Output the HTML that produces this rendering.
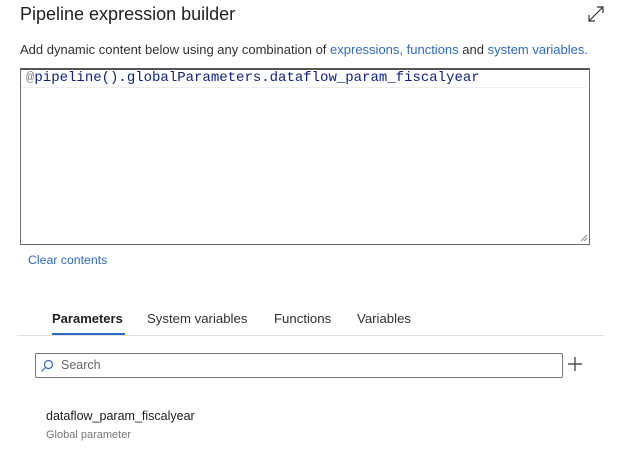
<!DOCTYPE html>
<html><head><style>
body{margin:0;width:621px;height:450px;background:#fff;font-family:"Liberation Sans",sans-serif;position:relative;overflow:hidden;color:#323130}
.a{position:absolute;white-space:nowrap}
.blue{color:#2f6bc4}
</style></head><body>
<div class="a" style="left:20px;top:4px;font-size:18px;color:#201f1e">Pipeline expression builder</div>
<svg class="a" style="left:587px;top:5px" width="18" height="18" viewBox="0 0 18 18" fill="none" stroke="#333" stroke-width="1.2"><path d="M2 16L16 2M10 2h6v6M2 10v6h6"/></svg>
<div class="a" style="left:20px;top:42px;font-size:13px;color:#323130">Add dynamic content below using any combination of <span class="blue">expressions, functions</span> and <span class="blue">system variables.</span></div>
<div class="a" style="left:20px;top:68px;width:568px;height:174px;border:1px solid #6e6e6e;border-top:2px solid #555"></div>
<div class="a" style="left:22px;top:70px;width:564px;height:17px;border-bottom:1px solid #eee"></div>
<div class="a" style="left:26px;top:70px;font-family:'Liberation Mono',monospace;font-size:14px;color:#0b1f8a"><span style="color:#888">@</span>pipeline().globalParameters.dataflow_param_fiscalyear</div>
<svg class="a" style="left:580px;top:234px" width="8" height="8"><path d="M1 7L7 1M4 7L7 4" stroke="#888"/></svg>
<div class="a blue" style="left:28px;top:253px;font-size:12.3px">Clear contents</div>
<div class="a" style="left:52px;top:311px;font-size:13px;font-weight:bold;color:#201f1e">Parameters</div>
<div class="a" style="left:147px;top:311px;font-size:13.2px">System variables</div>
<div class="a" style="left:274px;top:311px;font-size:13.2px">Functions</div>
<div class="a" style="left:357px;top:311px;font-size:13.2px">Variables</div>
<div class="a" style="left:17px;top:335px;width:587px;height:1px;background:#e1dfdd"></div>
<div class="a" style="left:52px;top:333px;width:73px;height:2px;background:#2f6bc4"></div>
<div class="a" style="left:35px;top:353px;width:526px;height:23px;border:1px solid #777;border-radius:2px"></div>
<svg class="a" style="left:40px;top:359px" width="14" height="14" fill="none" stroke="#2f6bc4" stroke-width="1.2"><circle cx="8.5" cy="5.5" r="4"/><path d="M5.5 8.5L1.5 12.5"/></svg>
<div class="a" style="left:61px;top:358px;font-size:12.5px;color:#666">Search</div>
<svg class="a" style="left:567px;top:356px" width="16" height="16" stroke="#333" stroke-width="1.2"><path d="M8 1v14M1 8h14"/></svg>
<div class="a" style="left:46px;top:409px;font-size:12.5px;color:#201f1e">dataflow_param_fiscalyear</div>
<div class="a" style="left:46px;top:429px;font-size:11px;color:#777">Global parameter</div>
</body></html>
